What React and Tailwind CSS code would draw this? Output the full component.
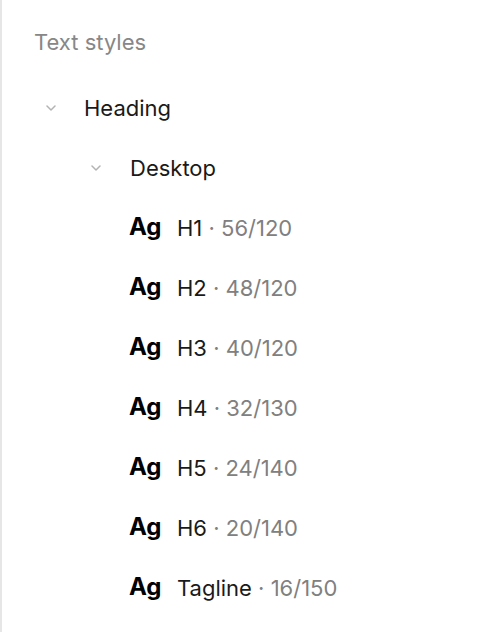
export default function App() {
  const styles = [
    ["H1", "56/120"],
    ["H2", "48/120"],
    ["H3", "40/120"],
    ["H4", "32/130"],
    ["H5", "24/140"],
    ["H6", "20/140"],
    ["Tagline", "16/150"],
  ];
  const Chevron = () => (
    <svg width="10" height="6" viewBox="0 0 10 6" fill="none">
      <path d="M1 1l4 4 4-4" stroke="#b3b3b3" strokeWidth="1.5" strokeLinecap="round" strokeLinejoin="round" />
    </svg>
  );
  return (
    <div className="w-[481px] h-[632px] bg-white border-l-2 border-[#e6e6e6] overflow-hidden" style={{ fontFamily: "Inter, 'Noto Sans', sans-serif" }}>
      <div className="pt-[12px] pl-[32px]">
        <div className="h-[60px] flex items-center text-[22px] text-[#878787]">Text styles</div>
        <div className="mt-[6px]">
          <div className="h-[60px] flex items-center">
            <div className="w-[50px] pl-[12px] flex"><Chevron /></div>
            <span className="text-[22px] text-[#1a1a1a]">Heading</span>
          </div>
          <div className="h-[60px] flex items-center pl-[45px]">
            <div className="w-[51px] pl-[12px] flex"><Chevron /></div>
            <span className="text-[22px] text-[#1a1a1a]">Desktop</span>
          </div>
          {styles.map(([n, v]) => (
            <div key={n} className="h-[60px] flex items-center pl-[95px]">
              <span className="text-[24px] font-bold text-black w-[48px] -mt-[2px]">Ag</span>
              <span className="text-[22px] text-[#1a1a1a]">{n}</span>
              <span className="text-[22px] text-[#808080]">&nbsp;· {v}</span>
            </div>
          ))}
        </div>
      </div>
    </div>
  );
}
